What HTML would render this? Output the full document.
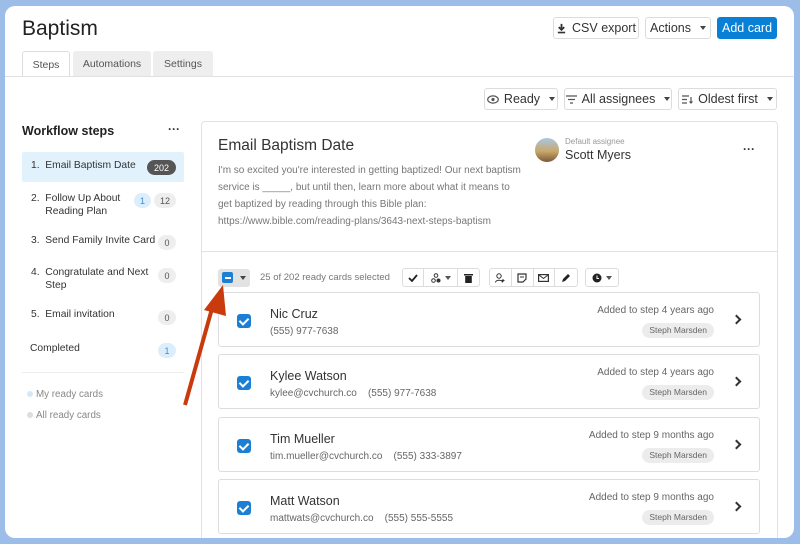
<!DOCTYPE html>
<html><head><meta charset="utf-8"><style>
*{box-sizing:border-box;margin:0;padding:0}
body{width:800px;height:544px;background:#9dbde9;font-family:"Liberation Sans",sans-serif;position:relative;overflow:hidden;color:#333}
.frame{position:absolute;left:5px;top:6px;width:789px;height:532px;background:#fff;border-radius:10px;overflow:hidden}
.a{position:absolute}
.btn{position:absolute;border:1px solid #dcdcdc;border-radius:3px;background:#fff;font-size:12.5px;color:#333;display:flex;align-items:center;justify-content:center;gap:5px}
.caret{display:inline-block;border-left:3px solid transparent;border-right:3px solid transparent;border-top:4px solid #444;margin-left:4px}
.tab{position:absolute;top:45px;height:25px;background:#eee;border-radius:3px 3px 0 0;font-size:10.5px;color:#555;display:flex;align-items:center;justify-content:center}
.item{position:absolute;left:17px;width:162px;font-size:10.3px;color:#333;line-height:12.5px}
.badge{position:absolute;height:15px;border-radius:8px;font-size:9px;display:flex;align-items:center;justify-content:center;background:#eee;color:#555}
.card{position:absolute;left:213px;width:542px;height:55px;border:1px solid #ddd;border-radius:3px}
.cb{position:absolute;left:18px;top:21px;width:14px;height:14px;background:#1d7fd4;border-radius:3px}
.cb:after{content:"";position:absolute;left:4px;top:2px;width:4px;height:7px;border:solid #fff;border-width:0 2px 2px 0;transform:rotate(45deg)}
.nm{position:absolute;left:51px;top:14px;font-size:12.5px;color:#333}
.sub{position:absolute;left:51px;top:33px;font-size:10px;color:#666}
.added{position:absolute;right:45px;top:12px;font-size:10px;color:#666}
.pill{position:absolute;right:45px;top:30px;height:15px;padding:0 7px;background:#ececec;border-radius:8px;font-size:8.5px;color:#666;line-height:15px}
.chev{position:absolute;right:19px;top:23px;width:7px;height:7px;border:solid #333;border-width:2px 2px 0 0;transform:rotate(45deg)}
.tb{position:absolute;top:262px;height:19px;border:1px solid #ddd;border-radius:3px;display:flex}
.tb span{height:17px;border-right:1px solid #ddd;display:flex;align-items:center;justify-content:center;font-size:10px;gap:4px}
.tb span:last-child{border-right:none}
.tb .caret{margin-left:0;border-top-color:#555}
</style></head><body>
<div class="frame">
<div class="a" style="left:17px;top:11px;font-size:21px;color:#222">Baptism</div>
<div class="tab" style="left:17px;width:48px;background:#fff;border:1px solid #ddd;border-bottom:none;height:26px">Steps</div>
<div class="tab" style="left:68px;width:78px">Automations</div>
<div class="tab" style="left:148px;width:60px">Settings</div>
<div class="a" style="left:0;top:70px;width:789px;height:1px;background:#e2e2e2"></div>

<div class="btn" style="left:548px;top:11px;width:86px;height:22px"><svg width="11" height="11" viewBox="0 0 12 12"><path d="M6 1v6M3 4.5l3 3 3-3" stroke="#333" stroke-width="2" fill="none"/><rect x="2" y="9.5" width="8" height="1.8" fill="#333"/></svg>CSV export</div>
<div class="btn" style="left:640px;top:11px;width:66px;height:22px">Actions<i class="caret"></i></div>
<div class="btn" style="left:712px;top:11px;width:60px;height:22px;background:#0a7fd6;border-color:#0a7fd6;color:#fff">Add card</div>

<div class="btn" style="left:479px;top:82px;width:74px;height:22px;font-size:12.5px"><svg width="12" height="9" viewBox="0 0 12 9"><ellipse cx="6" cy="4.5" rx="5.3" ry="3.6" stroke="#555" stroke-width="1.2" fill="none"/><circle cx="6" cy="4.5" r="1.6" fill="#555"/></svg>Ready<i class="caret"></i></div>
<div class="btn" style="left:559px;top:82px;width:108px;height:22px;font-size:12.5px"><svg width="11" height="9" viewBox="0 0 11 9"><path d="M0 1h11M2 4.5h7M4 8h3" stroke="#555" stroke-width="1.3"/></svg>All assignees<i class="caret"></i></div>
<div class="btn" style="left:673px;top:82px;width:99px;height:22px;font-size:12.5px"><svg width="11" height="9" viewBox="0 0 11 9"><path d="M0 1h7M0 4.5h5M0 8h5M9 2v6M7.5 6.5 9 8l1.5-1.5" stroke="#555" stroke-width="1.2" fill="none"/></svg>Oldest first<i class="caret"></i></div>

<div class="a" style="left:17px;top:118px;font-size:12.5px;font-weight:bold;color:#222">Workflow steps</div>
<div class="a" style="left:163px;top:116px;font-size:12px;font-weight:bold">···</div>
<div class="a" style="left:17px;top:146px;width:162px;height:30px;background:#e1f2fd;border-radius:2px"></div>
<div class="item" style="top:154px;left:26px">1.&nbsp; Email Baptism Date</div>
<div class="badge" style="left:142px;top:154px;width:29px;background:#555;color:#fff">202</div>
<div class="item" style="top:187px;left:26px;width:100px">2.&nbsp; Follow Up About<br>&nbsp;&nbsp;&nbsp;&nbsp; Reading Plan</div>
<div class="badge" style="left:129px;top:187px;width:17px;background:#dceefc;color:#3a8fd0">1</div>
<div class="badge" style="left:149px;top:187px;width:22px">12</div>
<div class="item" style="top:229px;left:26px">3.&nbsp; Send Family Invite Card</div>
<div class="badge" style="left:153px;top:229px;width:18px">0</div>
<div class="item" style="top:261px;left:26px;width:125px">4.&nbsp; Congratulate and Next<br>&nbsp;&nbsp;&nbsp;&nbsp; Step</div>
<div class="badge" style="left:153px;top:262px;width:18px">0</div>
<div class="item" style="top:303px;left:26px">5.&nbsp; Email invitation</div>
<div class="badge" style="left:153px;top:304px;width:18px">0</div>
<div class="item" style="top:337px;left:25px">Completed</div>
<div class="badge" style="left:153px;top:337px;width:18px;background:#dceefc;color:#3a8fd0">1</div>
<div class="a" style="left:17px;top:366px;width:162px;height:1px;background:#eee"></div>
<div class="a" style="left:22px;top:383px;font-size:9.8px;color:#888"><span style="display:inline-block;width:6px;height:6px;border-radius:50%;background:#d3e9f9;margin-right:3px"></span>My ready cards</div>
<div class="a" style="left:22px;top:404px;font-size:9.8px;color:#888"><span style="display:inline-block;width:6px;height:6px;border-radius:50%;background:#ddd;margin-right:3px"></span>All ready cards</div>

<div class="a" style="left:196px;top:115px;width:577px;height:440px;border:1px solid #e2e2e2;border-radius:4px"></div>
<div class="a" style="left:196px;top:245px;width:577px;height:1px;background:#e2e2e2"></div>
<div class="a" style="left:213px;top:131px;font-size:15.5px;color:#333">Email Baptism Date</div>
<div class="a" style="left:213px;top:156px;width:305px;font-size:10px;color:#777;line-height:17px">I'm so excited you're interested in getting baptized! Our next baptism service is _____, but until then, learn more about what it means to get baptized by reading through this Bible plan: https://www.bible.com/reading-plans/3643-next-steps-baptism</div>
<div class="a" style="left:530px;top:132px;width:24px;height:24px;border-radius:50%;background:linear-gradient(#a9c6e6 0,#c9a86a 55%,#7a5a3a 100%)"></div>
<div class="a" style="left:560px;top:131px;font-size:8px;color:#999">Default assignee</div>
<div class="a" style="left:560px;top:142px;font-size:12.5px;color:#333">Scott Myers</div>
<div class="a" style="left:738px;top:136px;font-size:12px;font-weight:bold">···</div>

<div class="a" style="left:213px;top:263px;width:32px;height:18px;background:#e2e2e2;border-radius:3px"></div>
<div class="a" style="left:217px;top:266px;width:11px;height:11px;background:#1d7fd4;border-radius:2px"></div>
<div class="a" style="left:219.5px;top:271px;width:6px;height:1.5px;background:#fff"></div>
<i class="caret a" style="left:231px;top:270px"></i>
<div class="a" style="left:255px;top:266px;font-size:9.5px;color:#777">25 of 202 ready cards selected</div>
<div class="tb" style="left:397px;width:78px">
<span style="width:22px"><svg width="10" height="8" viewBox="0 0 10 8"><path d="M1 4l3 3 5-6" stroke="#222" stroke-width="1.8" fill="none"/></svg></span>
<span style="width:34px"><svg width="10" height="10" viewBox="0 0 10 10"><circle cx="5" cy="2.5" r="1.8" stroke="#333" fill="none"/><circle cx="2.5" cy="7.5" r="1.8" stroke="#333" fill="none"/><circle cx="7.5" cy="7.5" r="2" fill="#333"/></svg><i class="caret"></i></span>
<span style="width:22px"><svg width="9" height="10" viewBox="0 0 9 10"><rect x="0" y="1" width="9" height="1.5" fill="#222"/><rect x="1.2" y="3" width="6.6" height="7" fill="#222"/></svg></span></div>
<div class="tb" style="left:484px;width:89px">
<span style="width:22px"><svg width="10" height="10" viewBox="0 0 10 10"><circle cx="4" cy="3" r="2.2" stroke="#333" fill="none"/><path d="M0.5 9.5c0-3 7-3 7 0M8 6v3M6.5 7.5h3" stroke="#333" fill="none"/></svg></span>
<span style="width:22px"><svg width="10" height="10" viewBox="0 0 10 10"><path d="M1 1h8v5l-3 3H1z" stroke="#333" stroke-width="1.2" fill="none"/><path d="M3 4h4" stroke="#333"/></svg></span>
<span style="width:22px"><svg width="11" height="8" viewBox="0 0 11 8"><rect x="0.6" y="0.6" width="9.8" height="6.8" stroke="#333" stroke-width="1.2" fill="none"/><path d="M1 1l4.5 3.5L10 1" stroke="#333" fill="none"/></svg></span>
<span style="width:22px"><svg width="10" height="10" viewBox="0 0 10 10"><path d="M1 9l1-3 5-5 2 2-5 5z" fill="#222"/></svg></span></div>
<div class="tb" style="left:580px;width:34px"><span style="width:34px"><svg width="10" height="10" viewBox="0 0 10 10"><circle cx="5" cy="5" r="4.5" fill="#222"/><path d="M5 2.5v3h2" stroke="#fff" fill="none"/></svg><i class="caret"></i></span></div>

<div class="card" style="top:286px"><div class="cb"></div><div class="nm">Nic Cruz</div><div class="sub">(555) 977-7638</div><div class="added">Added to step 4 years ago</div><div class="pill">Steph Marsden</div><div class="chev"></div></div>
<div class="card" style="top:348px"><div class="cb"></div><div class="nm">Kylee Watson</div><div class="sub">kylee@cvchurch.co &nbsp;&nbsp; (555) 977-7638</div><div class="added">Added to step 4 years ago</div><div class="pill">Steph Marsden</div><div class="chev"></div></div>
<div class="card" style="top:411px"><div class="cb"></div><div class="nm">Tim Mueller</div><div class="sub">tim.mueller@cvchurch.co &nbsp;&nbsp; (555) 333-3897</div><div class="added">Added to step 9 months ago</div><div class="pill">Steph Marsden</div><div class="chev"></div></div>
<div class="card" style="top:473px"><div class="cb"></div><div class="nm">Matt Watson</div><div class="sub">mattwats@cvchurch.co &nbsp;&nbsp; (555) 555-5555</div><div class="added">Added to step 9 months ago</div><div class="pill">Steph Marsden</div><div class="chev"></div></div>
</div>
<svg class="a" style="left:0;top:0" width="800" height="544"><path d="M185 405 L213 305" stroke="#c93a0d" stroke-width="4"/><polygon points="223,285 204,310 226,316" fill="#c93a0d"/></svg>
</body></html>
